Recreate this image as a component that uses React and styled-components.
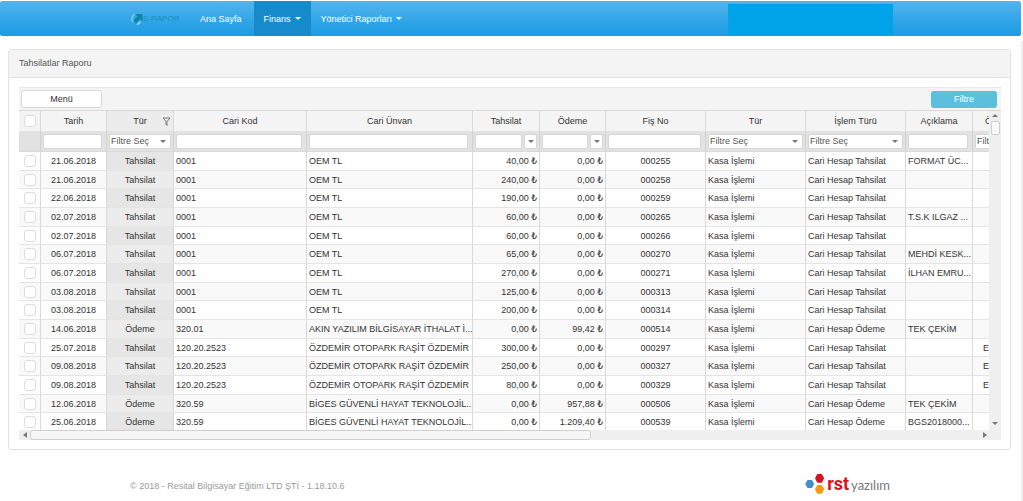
import React, { useState } from 'react';
import styled, { createGlobalStyle } from 'styled-components';

const columns = [
  { key: 'date', title: 'Tarih', width: 66, align: 'center', filter: 'text' },
  { key: 'type', title: 'Tür', width: 67, align: 'center', filter: 'select', grouped: true },
  { key: 'code', title: 'Cari Kod', width: 133, align: 'left', filter: 'text' },
  { key: 'name', title: 'Cari Ünvan', width: 166, align: 'left', filter: 'text' },
  { key: 'income', title: 'Tahsilat', width: 67, align: 'right', filter: 'number' },
  { key: 'payment', title: 'Ödeme', width: 66, align: 'right', filter: 'number' },
  { key: 'slip', title: 'Fiş No', width: 100, align: 'center', filter: 'text' },
  { key: 'kind', title: 'Tür', width: 100, align: 'left', filter: 'select' },
  { key: 'process', title: 'İşlem Türü', width: 100, align: 'left', filter: 'select' },
  { key: 'note', title: 'Açıklama', width: 67, align: 'left', filter: 'text' },
  { key: 'extra', title: 'Ö', width: 67, align: 'left', filter: 'select', inset: true },
];

const toRow = ([date, type, code, name, income, payment, slip, note = '', extra = '']) => ({
  date,
  type,
  code,
  name,
  income: `${income} ₺`,
  payment: `${payment} ₺`,
  slip,
  kind: 'Kasa İşlemi',
  process: `Cari Hesap ${type}`,
  note,
  extra,
});

const rows = [
  ['21.06.2018', 'Tahsilat', '0001', 'OEM TL', '40,00', '0,00', '000255', 'FORMAT ÜC...'],
  ['21.06.2018', 'Tahsilat', '0001', 'OEM TL', '240,00', '0,00', '000258'],
  ['22.06.2018', 'Tahsilat', '0001', 'OEM TL', '190,00', '0,00', '000259'],
  ['02.07.2018', 'Tahsilat', '0001', 'OEM TL', '60,00', '0,00', '000265', 'T.S.K ILGAZ ...'],
  ['02.07.2018', 'Tahsilat', '0001', 'OEM TL', '60,00', '0,00', '000266'],
  ['06.07.2018', 'Tahsilat', '0001', 'OEM TL', '65,00', '0,00', '000270', 'MEHDİ KESK...'],
  ['06.07.2018', 'Tahsilat', '0001', 'OEM TL', '270,00', '0,00', '000271', 'İLHAN EMRU...'],
  ['03.08.2018', 'Tahsilat', '0001', 'OEM TL', '125,00', '0,00', '000313'],
  ['03.08.2018', 'Tahsilat', '0001', 'OEM TL', '200,00', '0,00', '000314'],
  ['14.06.2018', 'Ödeme', '320.01', 'AKIN YAZILIM BİLGİSAYAR İTHALAT İ...', '0,00', '99,42', '000514', 'TEK ÇEKİM'],
  ['25.07.2018', 'Tahsilat', '120.20.2523', 'ÖZDEMİR OTOPARK RAŞİT ÖZDEMİR', '300,00', '0,00', '000297', '', 'E'],
  ['09.08.2018', 'Tahsilat', '120.20.2523', 'ÖZDEMİR OTOPARK RAŞİT ÖZDEMİR', '250,00', '0,00', '000327', '', 'E'],
  ['09.08.2018', 'Tahsilat', '120.20.2523', 'ÖZDEMİR OTOPARK RAŞİT ÖZDEMİR', '80,00', '0,00', '000329', '', 'E'],
  ['12.06.2018', 'Ödeme', '320.59', 'BİGES GÜVENLİ HAYAT TEKNOLOJİL...', '0,00', '957,88', '000506', 'TEK ÇEKİM'],
  ['25.06.2018', 'Ödeme', '320.59', 'BİGES GÜVENLİ HAYAT TEKNOLOJİL...', '0,00', '1.209,40', '000539', 'BGS2018000...'],
].map(toRow);

const Arrow = ({ direction = 'down' }) => {
  const paths = {
    down: 'M0 2h6L3 5z',
    up: 'M0 4h6L3 1z',
    left: 'M5 0v6L1 3z',
    right: 'M1 0v6l4-3z',
  };
  return (
    <ArrowIcon viewBox="0 0 6 6" aria-hidden="true">
      <path d={paths[direction]} />
    </ArrowIcon>
  );
};

// Filter control under each column title
const ColumnFilter = ({ column }) => {
  if (column.filter === 'select') {
    return (
      <FilterBox>
        <FilterSelect aria-label={`${column.title} filtresi`}>
          <option>Filtre Seç</option>
        </FilterSelect>
        <Arrow />
      </FilterBox>
    );
  }

  if (column.filter === 'number') {
    return (
      <NumberFilter>
        <FilterInput type="text" aria-label={`${column.title} filtresi`} />
        <OperatorButton type="button" aria-label={`${column.title} koşulu`}>
          <Arrow />
        </OperatorButton>
      </NumberFilter>
    );
  }

  return (
    <TextFilter>
      <FilterInput type="text" aria-label={`${column.title} filtresi`} />
    </TextFilter>
  );
};

const App = () => {
  const [checked, setChecked] = useState([]);

  const toggleRow = (slip) => {
    setChecked(checked.includes(slip)
      ? checked.filter((e) => e !== slip)
      : [...checked, slip]);
  };

  const toggleAll = () => {
    setChecked(checked.length === rows.length ? [] : rows.map((e) => e.slip));
  };

  return (
    <>
      <GlobalStyle />
      <Screen>
        <Page>
          <Navbar>
            <Container>
              <Brand href="#" aria-label="E-RAPOR">
                <BrandMark viewBox="0 0 12 12" aria-hidden="true">
                  <path d="M4 1A5.500 5.500 0 0 0 2 9" fill="none" stroke="#8accf0" strokeWidth="1.4" />
                  <path d="M4 1h7.500v7.500L9.200 6.200 5 10.300 2.300 7.600 6.400 3.400z" fill="#0c86a6" />
                  <path d="M5 11.800 9.500 7.500V10L7.500 11.800z" fill="#a4d6f2" />
                </BrandMark>
                E-RAPOR
              </Brand>
              <NavLink href="#">Ana Sayfa</NavLink>
              <NavButton type="button" $active>Finans <Caret /></NavButton>
              <NavButton type="button">Yönetici Raporları <Caret /></NavButton>
              <UserArea />
            </Container>
          </Navbar>

          <Panel>
            <PanelHeading>Tahsilatlar Raporu</PanelHeading>
            <PanelBody>
              <Grid>
                <Toolbar>
                  <MenuButton type="button">Menü</MenuButton>
                  <FilterButton type="button">Filtre</FilterButton>
                </Toolbar>

                <Viewport>
                  <TableArea>
                    <Table>
                      <colgroup>
                        <Col $width={22} />
                        {columns.map((column) => (
                          <Col key={column.key} $width={column.width} />
                        ))}
                      </colgroup>
                      <thead>
                        <tr>
                          <HeadCell>
                            <Checkbox
                              aria-label="Tümünü seç"
                              checked={checked.length === rows.length}
                              onChange={toggleAll}
                            />
                          </HeadCell>
                          {columns.map((column) => (
                            <HeadCell
                              key={column.key}
                              $grouped={column.grouped}
                              $inset={column.inset}
                            >
                              {column.grouped ? (
                                <HeadTitle>
                                  <span>{column.title}</span>
                                  <FunnelIcon viewBox="0 0 9 9" aria-hidden="true">
                                    <path d="M1 1h7L5 4.500V8.500L4 7.500V4.500z" />
                                  </FunnelIcon>
                                </HeadTitle>
                              ) : column.title}
                            </HeadCell>
                          ))}
                        </tr>
                        <tr>
                          <FilterCell />
                          {columns.map((column) => (
                            <FilterCell key={column.key}>
                              <ColumnFilter column={column} />
                            </FilterCell>
                          ))}
                        </tr>
                      </thead>
                      <tbody>
                        {rows.map((row) => (
                          <Row key={row.slip}>
                            <Cell $align="center">
                              <Checkbox
                                aria-label={row.slip}
                                checked={checked.includes(row.slip)}
                                onChange={() => toggleRow(row.slip)}
                              />
                            </Cell>
                            {columns.map((column) => (
                              <Cell
                                key={column.key}
                                $align={column.align}
                                $grouped={column.grouped}
                                $inset={column.inset}
                              >
                                {row[column.key]}
                              </Cell>
                            ))}
                          </Row>
                        ))}
                      </tbody>
                    </Table>
                  </TableArea>
                  <VerticalBar>
                    <Arrow direction="up" />
                    <VerticalThumb />
                    <Arrow direction="down" />
                  </VerticalBar>
                </Viewport>

                <HorizontalBar>
                  <Arrow direction="left" />
                  <HorizontalTrack>
                    <HorizontalThumb />
                  </HorizontalTrack>
                  <Arrow direction="right" />
                </HorizontalBar>
              </Grid>
            </PanelBody>
          </Panel>

          <Footer>
            <Container>
              <Copyright>© 2018 - Resital Bilgisayar Eğitim LTD ŞTİ - 1.18.10.6</Copyright>
              <Company href="#">
                <CompanyMark viewBox="0 0 20 20" aria-hidden="true">
                  <path d="M2.500 6h4.500L9.200 10 7 14H2.500L.2 10z" fill="#3f8fd0" />
                  <path d="M12.300 0h4.500L19.200 4.300l-2.400 4.500h-4.500L10 4.300z" fill="#d8131f" />
                  <path d="M12.300 11h4.500L19.200 15.300l-2.400 4.500h-4.500L10 15.300z" fill="#f39a12" />
                </CompanyMark>
                <CompanyName>rst</CompanyName>
                <CompanySuffix>yazılım</CompanySuffix>
              </Company>
            </Container>
          </Footer>
        </Page>
        <PageBar />
      </Screen>
    </>
  );
};

export default App;

const GlobalStyle = createGlobalStyle`
  *, *::before, *::after {
    box-sizing: border-box;
  }
  body {
    margin: 0;
    background: #fff;
    color: #333;
    font-family: "Liberation Sans", "DejaVu Sans", sans-serif;
    font-size: 9px;
    overflow: hidden;
  }
  button, input, select {
    margin: 0;
    color: inherit;
    font: inherit;
  }
`;

const Screen = styled.div`
  display: flex;
  min-height: 100vh;
  padding-top: 1px;
`;

const Page = styled.main`
  flex: 1;
  min-width: 0;
`;

// Scroll strip of the page
const PageBar = styled.div`
  width: 2px;
  margin-top: 40px;
  background: #ededed;
`;

const Navbar = styled.nav`
  height: 35px;
  border-radius: 2px;
  background: linear-gradient(#54b4eb, #2fa4e7 60%, #1d9ce5);
`;

const Container = styled.div`
  display: flex;
  align-items: center;
  max-width: 765px;
  height: 100%;
  margin: 0 auto;
  padding-left: 2px;
`;

const Brand = styled.a`
  display: flex;
  align-items: center;
  width: 59px;
  padding-left: 1px;
  color: #1a8ebc;
  font-size: 8px;
  text-decoration: none;
`;

const BrandMark = styled.svg`
  flex: none;
  width: 12px;
  height: 12px;
`;

const NavLink = styled.a`
  padding: 0 12px 0 11px;
  color: #fff;
  font-size: 9px;
  line-height: 34px;
  text-decoration: none;
`;

const NavButton = styled.button`
  display: flex;
  align-items: center;
  gap: 4px;
  height: 35px;
  padding: 0 10px;
  border: 0;
  background: ${({ $active }) => ($active ? '#178acc' : 'transparent')};
  color: #fff;
  cursor: pointer;
`;

const Caret = styled.span`
  border: 3px solid transparent;
  border-top-color: #fff;
  border-bottom: 0;
`;

const UserArea = styled.div`
  width: 165px;
  height: 31px;
  margin-left: auto;
  margin-top: 2px;
  background: #00a2e8;
`;

const Panel = styled.section`
  margin: 13px 10px 0 8px;
  border: 1px solid #e2e2e2;
  border-radius: 3px;
`;

const PanelHeading = styled.h1`
  margin: 0;
  padding: 0 10px;
  border-bottom: 1px solid #e2e2e2;
  background: #f4f4f4;
  color: #555;
  font-size: 9px;
  font-weight: normal;
  line-height: 27px;
`;

const PanelBody = styled.div`
  padding: 9px;
  padding-left: 10px;
`;

const Grid = styled.div`
  background: #f4f4f4;
`;

const Toolbar = styled.div`
  display: flex;
  align-items: center;
  justify-content: space-between;
  height: 23px;
  padding: 0 4px 0 2px;
  border-top: 1px solid #eaeaea;
`;

const MenuButton = styled.button`
  width: 81px;
  height: 18px;
  padding: 0;
  border: 1px solid #d9d9d9;
  border-radius: 3px;
  background: #fff;
  cursor: pointer;
`;

const FilterButton = styled.button`
  width: 66px;
  height: 17px;
  padding: 0;
  border: 0;
  border-radius: 3px;
  background: #5bc0de;
  color: #fff;
  cursor: pointer;
`;

const Viewport = styled.div`
  display: flex;
  height: 320px;
  border-top: 1px solid #d9d9d9;
`;

const TableArea = styled.div`
  flex: 1;
  min-width: 0;
  overflow: hidden;
`;

const Table = styled.table`
  width: 100%;
  min-width: 1021px;
  table-layout: fixed;
  border-collapse: separate;
  border-spacing: 0;
`;

const Col = styled.col`
  width: ${({ $width }) => $width}px;
`;

const HeadCell = styled.th`
  height: 20px;
  padding: 0;
  padding-left: ${({ $inset }) => ($inset ? 12 : 0)}px;
  border-right: 1px solid #d9d9d9;
  background: ${({ $grouped }) => ($grouped ? '#ececec' : '#f4f4f4')};
  font-weight: normal;
  text-align: ${({ $inset }) => ($inset ? 'left' : 'center')};
`;

const HeadTitle = styled.div`
  display: grid;
  grid-template-columns: 1fr auto 1fr;
  align-items: center;

  span {
    grid-column: 2;
  }
`;

const FunnelIcon = styled.svg`
  justify-self: end;
  width: 9px;
  height: 9px;
  margin-right: 2px;
  fill: none;
  stroke: #777;
`;

const FilterCell = styled.td`
  height: 21px;
  padding: 0 2px;
  border-right: 1px solid #d0d0d0;
  border-bottom: 1px solid #d9d9d9;
  background: #e2e2e2;
`;

const TextFilter = styled.div`
  display: flex;
  padding-right: 2px;
`;

const NumberFilter = styled.div`
  display: flex;
  gap: 2px;
`;

const FilterInput = styled.input`
  flex: 1;
  min-width: 0;
  height: 15px;
  padding: 0 2px;
  border: 1px solid #d6d6d6;
  border-radius: 2px;
  background: #fff;
`;

const FilterBox = styled.div`
  display: flex;
  align-items: center;
  height: 15px;
  padding-right: 4px;
  border: 1px solid #d6d6d6;
  border-radius: 2px;
  background: #fff;
`;

const FilterSelect = styled.select`
  flex: 1;
  min-width: 0;
  height: 13px;
  padding: 0 1px;
  border: 0;
  appearance: none;
  background: transparent;
  color: #555;
`;

const OperatorButton = styled.button`
  display: flex;
  align-items: center;
  justify-content: center;
  width: 13px;
  height: 15px;
  padding: 0;
  border: 1px solid #d6d6d6;
  border-radius: 2px;
  background: #fff;
`;

const ArrowIcon = styled.svg`
  flex: none;
  width: 6px;
  height: 6px;
  fill: #777;
`;

const Checkbox = styled.input.attrs({ type: 'checkbox' })`
  display: block;
  width: 12px;
  height: 12px;
  margin: 0 auto;
  border: 1px solid #dcdcdc;
  border-radius: 3px;
  appearance: none;
  background: #fff;

  &:checked {
    background: #5bc0de;
  }
`;

const Cell = styled.td`
  height: 19px;
  padding: ${({ $align }) => ($align === 'left' ? '0 0 0 2px' : '0 2px')};
  ${({ $inset }) => $inset && 'padding-left: 10px;'}
  overflow: hidden;
  border-right: 1px solid #d9d9d9;
  border-bottom: 1px solid #e4e4e4;
  background: ${({ $grouped }) => ($grouped ? '#e6e6e6' : 'transparent')};
  line-height: 12px;
  text-align: ${({ $align }) => $align};
  white-space: nowrap;
`;

const Row = styled.tr`
  background: #fff;

  &:nth-child(even) {
    background: #f9f9f9;
  }
  &:nth-child(even) ${Cell}:nth-child(3) {
    background: #ececec;
  }
  &:nth-child(3n + 2) ${Cell} {
    height: 18px;
  }
`;

const VerticalBar = styled.div`
  display: flex;
  flex-direction: column;
  align-items: center;
  width: 12px;
  padding: 2px 0 4px;
  background: #efefef;

  ${ArrowIcon}:last-child {
    margin-top: auto;
  }
`;

const VerticalThumb = styled.div`
  width: 9px;
  height: 14px;
  margin-top: 2px;
  border: 1px solid #cfcfcf;
  border-radius: 2px;
  background: #f8f8f8;
`;

const HorizontalBar = styled.div`
  display: flex;
  align-items: center;
  height: 10px;
  padding: 0 13px 0 3px;
  background: #efefef;
`;

const HorizontalTrack = styled.div`
  flex: 1;
  margin: 0 2px;
`;

const HorizontalThumb = styled.div`
  width: 59%;
  height: 10px;
  border: 1px solid #cfcfcf;
  border-radius: 3px;
  background: #f6f6f6;
`;

const Footer = styled.footer`
  height: 40px;
  margin-top: 14px;
`;

const Copyright = styled.p`
  margin: 0;
  padding-top: 4px;
  color: #999;
`;

const Company = styled.a`
  display: flex;
  align-items: center;
  margin-left: auto;
  padding-right: 3px;
  text-decoration: none;
`;

const CompanyMark = styled.svg`
  width: 20px;
  height: 20px;
  margin-right: 2px;
`;

const CompanyName = styled.span`
  color: #d8131f;
  font-family: Roboto, sans-serif;
  font-size: 18px;
  font-weight: bold;
  line-height: 20px;
`;

const CompanySuffix = styled.span`
  padding: 2px 0 0 2px;
  color: #777;
  font-family: Lato, sans-serif;
  font-size: 13px;
  line-height: 20px;
`;
